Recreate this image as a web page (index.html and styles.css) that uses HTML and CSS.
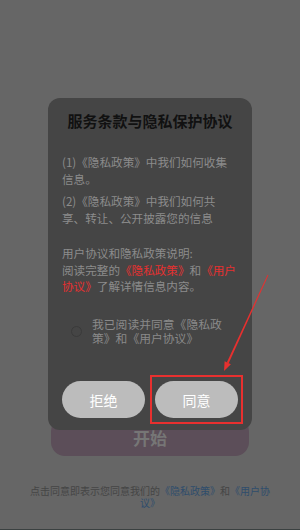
FILE: index.html
```html
<!DOCTYPE html>
<html lang="zh-CN">
<head>
<meta charset="utf-8">
<link rel="stylesheet" href="styles.css">
</head>
<body>
<div class="page">
  <div class="start-btn">开始</div>
  <p class="footer">点击同意即表示您同意我们的<span class="link">《隐私政策》</span>和<span class="link">《用户协<br>议》</span></p>
</div>

<div class="dialog">
  <h1 class="title">服务条款与隐私保护协议</h1>
  <div class="body">
    <p class="para p1">(1)《隐私政策》中我们如何收集<br>信息。</p>
    <p class="para p2">(2)《隐私政策》中我们如何共<br>享、转让、公开披露您的信息</p>
    <p class="para p3">用户协议和隐私政策说明:<br>阅读完整的<span class="red">《隐私政策》</span>和<span class="red">《用户<br>协议》</span>了解详情信息内容。</p>
  </div>
  <div class="check-row">
    <span class="radio"></span>
    <span class="check-text">我已阅读并同意《隐私政<br>策》和《用户协议》</span>
  </div>
  <div class="buttons">
    <div class="btn">拒绝</div>
    <div class="btn">同意</div>
  </div>
</div>

<div class="highlight"></div>
<svg class="arrow" width="300" height="530" viewBox="0 0 300 530">
  <polygon points="268.4,275.2 267.6,274.8 226.8,362.4 228.7,363.2" fill="#e8302f"/>
  <polygon points="224,371 224.6,361.3 230.9,364.3" fill="#e8302f"/>
</svg>
</body>
</html>
```
FILE: styles.css
```css
* { box-sizing: border-box; }
html, body { margin: 0; padding: 0; }
body {
  width: 300px;
  height: 530px;
  background: #666666;
  font-family: "Noto Sans CJK SC", "Noto Sans", sans-serif;
  text-spacing-trim: space-all;
  position: relative;
  overflow: hidden;
  border-bottom: 1px solid #3b4141;
}
.page {
  height: 529px;
  display: flex;
  flex-direction: column;
  justify-content: flex-end;
  align-items: center;
  padding-bottom: 20px;
}
.start-btn {
  width: 198px;
  height: 38px;
  border-radius: 14px;
  background: #5c4e59;
  color: #767676;
  font-size: 17px;
  font-weight: bold;
  display: flex;
  align-items: center;
  justify-content: center;
}
.footer {
  margin: 29px 0 0;
  width: 300px;
  text-align: center;
  white-space: nowrap;
  font-size: 10px;
  line-height: 12px;
  color: #454545;
}
.link { color: #2f4d6c; }

.dialog {
  position: absolute;
  left: 48px;
  top: 98px;
  width: 204px;
  height: 332px;
  background: #454545;
  border-radius: 12px;
  padding: 13px 14px 12px;
  display: flex;
  flex-direction: column;
}
.title {
  margin: 0;
  font-size: 15px;
  line-height: 20px;
  font-weight: bold;
  color: #111111;
  text-align: center;
}
.para {
  margin: 0;
  font-size: 11.6px;
  line-height: 16.5px;
  color: #8c8c8c;
  white-space: nowrap;
}
.p1 { margin-top: 23px; }
.p2 { margin-top: 6px; }
.p3 { margin-top: 19px; }
.red { color: #e53030; }
.check-row {
  margin-top: 22px;
  display: flex;
  align-items: center;
  padding-left: 9px;
}
.radio {
  width: 11px;
  height: 11px;
  border-radius: 50%;
  border: 1px solid #3a3a3a;
  flex: none;
}
.check-text {
  margin-left: 10px;
  white-space: nowrap;
  font-size: 11.8px;
  line-height: 14.5px;
  color: #8a8a8a;
}
.buttons {
  margin-top: auto;
  display: flex;
  gap: 10px;
}
.btn {
  flex: 1;
  height: 37px;
  border-radius: 19px;
  background: #bcbcbc;
  color: #ffffff;
  font-size: 14px;
  display: flex;
  align-items: center;
  justify-content: center;
}
.highlight {
  position: absolute;
  left: 150px;
  top: 375px;
  width: 93px;
  height: 49px;
  border: 2px solid #e8302f;
}
.arrow {
  position: absolute;
  left: 0;
  top: 0;
}
```
